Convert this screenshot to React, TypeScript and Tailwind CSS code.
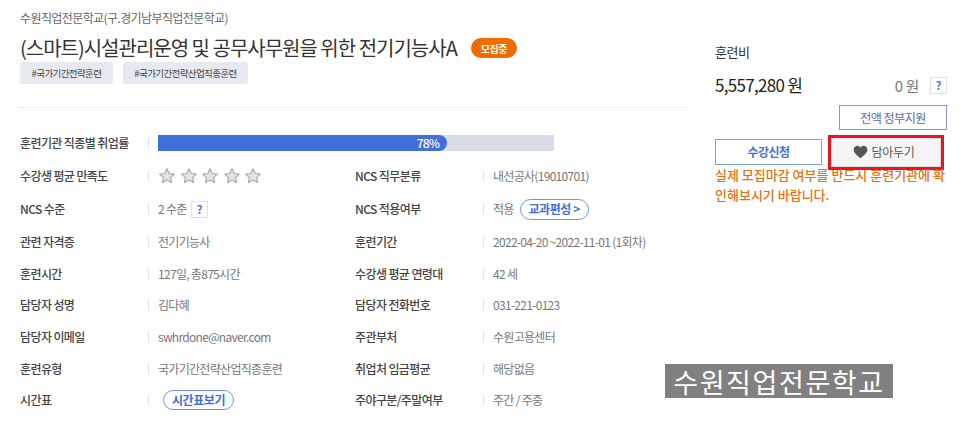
const font = "font-['Noto_Sans_CJK_KR','Noto_Sans',sans-serif]"

interface RowProps {
  label: string
  children: React.ReactNode
  height?: string
}

function Row({ label, children, height = 'h-[32px]' }: RowProps) {
  return (
    <div className={`flex items-center ${height}`}>
      <div className="w-[128px] shrink-0 text-[12px] font-medium tracking-[-0.6px] text-[#444]">{label}</div>
      <div className="mr-[10px] h-[10px] w-px shrink-0 bg-[#dde1e6]" />
      <div className="-ml-px flex items-center text-[12px] tracking-[-0.7px] text-[#777]">{children}</div>
    </div>
  )
}

function Help({ className }: { className?: string }) {
  return (
    <span className={`flex h-[17px] w-[17px] items-center justify-center border border-[#dfe3e8] text-[11px] font-bold leading-none text-[#4a73dd] ${className ?? ''}`}>
      ?
    </span>
  )
}

function Star() {
  return (
    <svg width="18" height="18" viewBox="0 0 24 24" fill="#e4e4e4" stroke="#aaa" strokeWidth="1.6" strokeLinejoin="round">
      <path d="M12 2.5l2.9 6.2 6.8.8-5 4.6 1.3 6.7-6-3.4-6 3.4 1.3-6.7-5-4.6 6.8-.8z" />
    </svg>
  )
}

function Pill({ children, className }: { children: React.ReactNode; className?: string }) {
  return (
    <span className={`flex items-center justify-center rounded-full border border-[#6d94ee] text-[12px] font-bold tracking-[-0.4px] text-[#3f6fdc] ${className ?? ''}`}>
      {children}
    </span>
  )
}

export default function App() {
  return (
    <div className={`relative flex h-[438px] w-[966px] overflow-hidden bg-white pl-[20px] ${font}`}>
      <div className="w-[670px] shrink-0">
        <div className="pt-[9px] text-[12px] leading-[18px] tracking-[-0.6px] text-[#666]">수원직업전문학교(구.경기남부직업전문학교)</div>
        <div className="mt-[8px] flex h-[26px] items-center">
          <h1 className="text-[20px] font-normal leading-[26px] tracking-[-1px] text-[#333]">(스마트)시설관리운영 및 공무사무원을 위한 전기기능사A</h1>
          <span className="ml-[14px] flex h-[20px] w-[46px] items-center justify-center rounded-full bg-[#ee6c00] text-[10px] font-bold tracking-[-0.5px] text-white">모집중</span>
        </div>
        <div className="mt-[1px] flex gap-[10px]">
          <span className="flex h-[22px] w-[93px] items-center justify-center rounded-[3px] bg-[#e6e9ef] text-[9.5px] tracking-[-0.6px] text-[#444]">#국가기간전략훈련</span>
          <span className="flex h-[22px] w-[125px] items-center justify-center rounded-[3px] bg-[#e6e9ef] text-[9.5px] tracking-[-0.6px] text-[#444]">#국가기간전략산업직종훈련</span>
        </div>
        <div className="mt-[23px] border-t border-dotted border-[#ddd]" />
        <div className="mt-[19px]">
          <div className="flex h-[32px] items-center">
            <div className="w-[128px] shrink-0 text-[12px] font-medium tracking-[-0.6px] text-[#444]">훈련기관 직종별 취업률</div>
            <div className="h-[10px] w-px shrink-0 bg-[#dde1e6]" />
            <div className="ml-[9px] h-[16px] w-[396px] bg-[#d8dde9]">
              <div className="flex h-full w-[73%] items-center justify-end rounded-r-full bg-[#406fdd] pr-[8px] text-[12px] font-medium tracking-[-0.9px] text-white">78%</div>
            </div>
          </div>
          <div className="mt-[1px] grid grid-cols-[335px_1fr]">
            <Row label="수강생 평균 만족도">
              <span className="flex gap-[3.5px]">
                <Star />
                <Star />
                <Star />
                <Star />
                <Star />
              </span>
            </Row>
            <Row label="NCS 직무분류">내선공사(19010701)</Row>
            <Row label="NCS 수준" height="h-[34px]">
              2 수준<Help className="ml-[4px]" />
            </Row>
            <Row label="NCS 적용여부" height="h-[34px]">
              적용<Pill className="ml-[6px] h-[21px] w-[69px]">교과편성 &gt;</Pill>
            </Row>
            <Row label="관련 자격증">전기기능사</Row>
            <Row label="훈련기간">2022-04-20 ~2022-11-01 (1회차)</Row>
            <Row label="훈련시간" height="h-[31px]">127일, 총875시간</Row>
            <Row label="수강생 평균 연령대" height="h-[31px]">42 세</Row>
            <Row label="담당자 성명">김다혜</Row>
            <Row label="담당자 전화번호">031-221-0123</Row>
            <Row label="담당자 이메일">swhrdone@naver.com</Row>
            <Row label="주관부처">수원고용센터</Row>
            <Row label="훈련유형" height="h-[31px]">국가기간전략산업직종훈련</Row>
            <Row label="취업처 임금평균" height="h-[31px]">해당없음</Row>
            <Row label="시간표">
              <Pill className="ml-[5px] h-[20px] w-[71px]">시간표보기</Pill>
            </Row>
            <Row label="주야구분/주말여부">주간 / 주중</Row>
          </div>
        </div>
      </div>
      <div className="ml-[25px] w-[232px] shrink-0">
        <div className="mt-[42px] text-[13px] leading-[20px] tracking-[-0.5px] text-[#333]">훈련비</div>
        <div className="mt-[11px] flex items-end justify-between">
          <span className="text-[17px] font-normal leading-[24px] tracking-[-0.7px] text-[#222]">5,557,280 원</span>
          <span className="flex items-center gap-[11px] text-[15px] tracking-[-0.4px] text-[#777]">
            0 원<Help />
          </span>
        </div>
        <div className="mt-[8px] flex justify-end">
          <div className="flex h-[25px] w-[108px] items-center justify-center border border-[#8b8fe0] text-[12px] tracking-[-0.5px] text-[#5b66a8]">전액 정부지원</div>
        </div>
        <div className="mt-[9px] flex h-[26px] items-center gap-[6px]">
          <div className="flex h-[26px] w-[107px] items-center justify-center border border-[#7d9fe8] text-[12px] font-bold tracking-[-0.5px] text-[#4470d8]">수강신청</div>
          <div className="flex h-[35px] w-[116px] shrink-0 items-center justify-center gap-[4px] border-[3px] border-[#e8141f] bg-[#f5f5f5] pr-[5px] text-[12px] tracking-[-0.3px] text-[#555] outline outline-[#ddd] -outline-offset-4">
            <svg width="15" height="14" viewBox="0 0 24 22" fill="#555">
              <path d="M12 21C5 15.5 1 11.5 1 7a6 6 0 0 1 11-3.2A6 6 0 0 1 23 7c0 4.5-4 8.5-11 14z" />
            </svg>
            담아두기
          </div>
        </div>
        <p className="relative text-[13px] font-medium leading-[20px] text-[#e8700f]">
          실제 모집마감 여부를 반드시 훈련기관에 확인해보시기 바랍니다.
        </p>
      </div>
      <div className="absolute left-[665px] top-[364px] flex h-[34px] w-[228px] items-center justify-center bg-[#808080] text-[27px] leading-none tracking-[1.6px] text-white">
        수원직업전문학교
      </div>
    </div>
  )
}
